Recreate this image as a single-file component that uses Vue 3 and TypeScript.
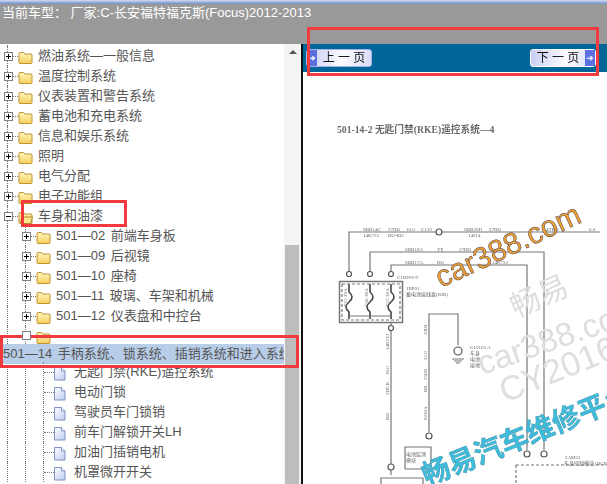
<template>
  <div class="page">
    <header class="head">
      <div class="strip"></div>
      <div class="model">当前车型： 厂家:C-长安福特福克斯(Focus)2012-2013</div>
    </header>

    <main class="body">
      <section class="tree-pane">
        <div class="tree">
          <template v-for="row in rows" :key="row.id">
            <div v-if="row.selected" class="row-selected">{{ row.text }}</div>
            <div v-else class="row" :class="{ 'after-selected': row.afterSelected }">
              <i v-for="n in row.level" :key="n" class="guide"></i>
              <span class="stub">
                <svg v-if="row.toggle" class="toggle" width="11" height="11" viewBox="0 0 11 11">
                  <rect x="1.500" y="1.500" width="8" height="8" fill="#fff" stroke="#808080" />
                  <path v-if="row.toggle !== 'empty'" d="M3 5.500h5" stroke="#000" />
                  <path v-if="row.toggle === 'plus'" d="M5.500 3v5" stroke="#000" />
                </svg>
              </span>
              <svg v-if="row.icon === 'doc'" class="icon" width="15" height="15" viewBox="0 0 15 15">
                <path d="M0.500 1.500h7l3.500 3.500v9h-10.500z" fill="url(#docFill)" stroke="#8090c4" />
                <path d="M7.500 1.500v3.500h3.500" fill="#fff" stroke="#8090c4" />
              </svg>
              <svg v-else class="icon" width="15" height="15" viewBox="0 0 15 15">
                <path d="M1 3.500q0-1 1-1h3.500l1.500 1.500h6q1 0 1 1v7.500q0 1-1 1h-11q-1 0-1-1z" fill="url(#folderFill)" stroke="#bf9430" />
                <path v-if="row.icon === 'open'" d="M4 7h10.500l-2 6.500h-10z" fill="#fbe58e" stroke="#b08a2c" />
              </svg>
              <span class="label">{{ row.text }}</span>
            </div>
          </template>
        </div>
        <div class="scrollbar">
          <span class="arrow"></span>
          <span class="thumb"></span>
        </div>
      </section>

      <section class="doc-pane">
        <nav class="pager">
          <button class="page-btn">
            <span class="btn-arrow">&#10140;</span>
            <span class="btn-text">上 一 页</span>
          </button>
          <button class="page-btn next">
            <span class="btn-text">下 一 页</span>
            <span class="btn-arrow">&#10140;</span>
          </button>
        </nav>

        <svg class="sheet" viewBox="303 73 304 411" width="304" height="411">
          <defs>
            <linearGradient id="carFill" gradientUnits="userSpaceOnUse" x1="440" y1="290" x2="590" y2="215">
              <stop offset="0" stop-color="#f0a030" />
              <stop offset="0.2" stop-color="#8a5ab0" />
              <stop offset="0.4" stop-color="#f6dc48" />
              <stop offset="0.55" stop-color="#9a6ab8" />
              <stop offset="0.75" stop-color="#f8d040" />
              <stop offset="1" stop-color="#ec9a34" />
            </linearGradient>
          </defs>

          <g class="scan">
            <text class="sheet-title" x="337" y="133">501-14-2 无匙门禁(RKE)遥控系统—4</text>

            <g class="wires">
              <path d="M349 274V232H600" />
              <path d="M370 274V252H544V450" />
              <path d="M391 274V265H527V450" />
              <path d="M391 322V475" />
              <path d="M458 345V314H429V432" />
              <path d="M405 469V447H431V469H405" />
              <path d="M381 484V478H423V484" />
              <rect x="339.500" y="281.500" width="63" height="41" stroke-width="1.500" />
              <rect class="dash" x="342" y="284" width="58" height="36" />
              <path class="fuse" d="M349 284v8q6 5 0 10q-6 5 0 10v7M370 284v8q6 5 0 10q-6 5 0 10v7M391 284v8q6 5 0 10q-6 5 0 10v7" />
              <path d="M349 316H391" />
              <path class="dash" d="M516 465H607M516 465V484" />
              <path d="M452 359h12M454 361h8M456 363h4" />
              <circle cx="349" cy="274" r="2.500" />
              <circle cx="370" cy="274" r="2.500" />
              <circle cx="391" cy="274" r="2.500" />
              <circle cx="391" cy="328" r="2.500" />
              <circle cx="458" cy="351" r="4" />
              <circle cx="429" cy="436" r="3" />
              <circle cx="527" cy="454" r="3" />
              <circle cx="544" cy="454" r="3" />
              <circle cx="391" cy="467" r="3" />
              <circle cx="439" cy="232" r="3" />
            </g>

            <g class="tiny">
              <text x="363" y="231">SBB14C</text>
              <text x="363" y="237">14K733</text>
              <text x="388" y="231">27RD</text>
              <text x="388" y="237">BU-RD</text>
              <text x="406" y="231">10.0</text>
              <text x="421" y="231">C110</text>
              <text x="464" y="231">SBB20H</text>
              <text x="468" y="237">14014</text>
              <text x="489" y="231">27RD</text>
              <text x="546" y="231">4TRD</text>
              <text x="589" y="231">6.0</text>
              <text x="405" y="251">SBB18A</text>
              <text x="437" y="251">YE</text>
              <text x="459" y="251">37RD</text>
              <text x="405" y="264">SBB17A</text>
              <text x="437" y="264">RD</text>
              <text x="492" y="264">14K733</text>
              <text x="397" y="279">C1BP01-9</text>
              <text x="406" y="290">1BP01</text>
              <text x="406" y="296">蓄电池接线盒(BJB)</text>
              <text x="470" y="349">G10103 A</text>
              <text x="470" y="355">车身</text>
              <text x="470" y="361">电池</text>
              <text x="470" y="367">接地</text>
              <text x="406" y="456">电池监测</text>
              <text x="406" y="462">模块</text>
              <text x="565" y="459">2AM52</text>
              <text x="564" y="465">车身控制模块 (BCM)</text>
              <text transform="translate(347 306) rotate(-90)">F55 30A</text>
              <text transform="translate(368 306) rotate(-90)">F56 30A</text>
              <text transform="translate(389 306) rotate(-90)">F57 30A</text>
              <text transform="translate(389 350) rotate(-90)">14K733</text>
              <text transform="translate(389 375) rotate(-90)">30.0</text>
              <text transform="translate(389 395) rotate(-90)">3DCB</text>
              <text transform="translate(389 420) rotate(-90)">RD</text>
              <text transform="translate(427 335) rotate(-90)">13D1</text>
              <text transform="translate(427 360) rotate(-90)">35.0</text>
              <text transform="translate(427 380) rotate(-90)">35D0</text>
              <text transform="translate(427 392) rotate(-90)">BK</text>
              <text transform="translate(427 420) rotate(-90)">0210A</text>
            </g>
          </g>

          <g class="marks">
            <text class="mark-gray" transform="translate(516 318) rotate(-24)" font-size="30">畅易</text>
            <text class="mark-gray" transform="translate(482 375) rotate(-19)" font-size="33">car388.com</text>
            <text class="mark-gray" transform="translate(505 403) rotate(-22)" font-size="34">CY2016</text>
            <text class="mark-car" transform="translate(441 288) rotate(-25)" font-size="30" fill="url(#carFill)">car388.com</text>
            <text class="mark-cyan" transform="translate(427 486) rotate(-22)" font-size="28">畅易汽车维修平台</text>
          </g>
        </svg>
      </section>
    </main>

    <!-- 截图上的红色标注框 -->
    <div class="mark-box box-title"></div>
    <div class="mark-box box-row"></div>
    <div class="mark-box box-pager"></div>

    <svg width="0" height="0" class="defs">
      <defs>
        <linearGradient id="folderFill" x1="0" y1="0" x2="0" y2="1">
          <stop offset="0" stop-color="#fff6c0" />
          <stop offset="1" stop-color="#f6cf5e" />
        </linearGradient>
        <linearGradient id="docFill" x1="0" y1="0" x2="1" y2="1">
          <stop offset="0" stop-color="#ffffff" />
          <stop offset="1" stop-color="#bccef2" />
        </linearGradient>
      </defs>
    </svg>
  </div>
</template>

<script setup lang="ts">
interface TreeRow {
  id: number;
  text: string;
  level: number;
  icon: "folder" | "open" | "doc";
  toggle?: "plus" | "minus" | "empty";
  selected?: boolean;
  afterSelected?: boolean;
}

const topLevel = ["", "燃油系统—一般信息", "温度控制系统", "仪表装置和警告系统", "蓄电池和充电系统", "信息和娱乐系统", "照明", "电气分配", "电子功能组"];
const bodyGroups = ["501—02 前端车身板", "501—09 后视镜", "501—10 座椅", "501—11 玻璃、车架和机械", "501—12 仪表盘和中控台"];
const docs = ["无匙门禁(RKE)遥控系统", "电动门锁", "驾驶员车门锁销", "前车门解锁开关LH", "加油门插销电机", "机罩微开开关"];

let id = 0;
const rows: TreeRow[] = [
  ...topLevel.map((text): TreeRow => ({ id: id++, text, level: 0, icon: "folder", toggle: "plus" })),
  { id: id++, text: "车身和油漆", level: 0, icon: "open", toggle: "minus" },
  ...bodyGroups.map((text): TreeRow => ({ id: id++, text, level: 1, icon: "folder", toggle: "plus" })),
  { id: id++, text: "", level: 1, icon: "folder", toggle: "empty" },
  { id: id++, text: "501—14 手柄系统、锁系统、插销系统和进入系统", level: 0, icon: "folder", selected: true },
  ...docs.map((text, i): TreeRow => ({ id: id++, text, level: 2, icon: "doc", afterSelected: i === 0 })),
];
</script>

<style scoped>
.page {
  position: relative;
  width: 607px;
  height: 484px;
  overflow: hidden;
  display: flex;
  flex-direction: column;
  background: #fff;
  font-family: "Liberation Sans", "Noto Sans CJK SC", sans-serif;
}
.head {
  height: 44px;
  flex: none;
  background: #999999;
}
.strip {
  height: 4px;
  background: linear-gradient(#d4def2, #6f8ccb);
}
.model {
  padding-left: 2px;
  font-size: 13px;
  line-height: 17px;
  color: #fff;
  white-space: pre;
}
.body {
  flex: 1;
  min-height: 0;
  display: flex;
}
.tree-pane {
  width: 301px;
  flex: none;
  display: flex;
  overflow: hidden;
}
.tree {
  width: 284px;
  flex: none;
  margin-top: -18px;
  font-size: 13px;
  word-spacing: 2px;
  color: #555;
}
.row {
  height: 20px;
  display: flex;
  align-items: stretch;
  padding-left: 7px;
  white-space: nowrap;
}
.row-selected {
  position: relative;
  height: 20px;
  line-height: 20px;
  padding-left: 3px;
  background: #b8cde8;
  white-space: nowrap;
  overflow: hidden;
}
.row:has(+ .row-selected) {
  height: 18px;
}
.after-selected {
  margin-top: -2px;
}
.guide {
  width: 18px;
  flex: none;
  box-sizing: border-box;
  border-left: 1px dotted #777;
}
.stub {
  position: relative;
  width: 11px;
  flex: none;
  box-sizing: border-box;
  border-left: 1px dotted #777;
}
.stub::after {
  content: "";
  position: absolute;
  left: 0;
  right: 0;
  top: 50%;
  border-top: 1px dotted #777;
}
.toggle {
  position: absolute;
  left: -5px;
  top: calc(50% - 5px);
  z-index: 1;
}
.icon {
  flex: none;
  margin: 4px 5px 0 0;
}
.label {
  line-height: 20px;
}
.scrollbar {
  width: 17px;
  flex: none;
  display: flex;
  flex-direction: column;
  align-items: center;
  background: #f4f4f4;
}
.arrow {
  margin-top: 6px;
  border: 4px solid transparent;
  border-top: 0;
  border-bottom: 4px solid #555;
}
.thumb {
  width: 14px;
  margin: 191px 2px 0 0;
  flex: 1;
  background: #bdbdbd;
}
.doc-pane {
  position: relative;
  flex: 1;
  min-width: 0;
  border-left: 2px solid #111;
}
.pager {
  height: 28px;
  padding: 0 11px 0 3px;
  display: flex;
  justify-content: space-between;
  align-items: center;
  background: #006699;
  border-bottom: 1px solid #fff;
}
.page-btn {
  width: 66px;
  height: 18px;
  padding: 0;
  display: flex;
  align-items: center;
  background: linear-gradient(100deg, #c6ccf2, #fbfbff 55%, #d6daf6);
  border: 1px solid #aab2e4;
  border-radius: 3px;
  font-family: inherit;
  color: #111;
}
.btn-arrow {
  width: 10px;
  height: 100%;
  flex: none;
  background: #5c6fe0;
  color: #fff;
  font-size: 9px;
  line-height: 16px;
  text-align: center;
}
.btn-text {
  flex: 1;
  font-size: 12px;
  line-height: 16px;
  text-align: center;
  white-space: nowrap;
  filter: blur(0.3px);
}
.next {
  border-color: #fff;
}
.sheet {
  display: block;
}
.scan {
  filter: blur(0.45px);
}
.sheet-title {
  font-family: "Liberation Serif", "Noto Sans CJK SC", serif;
  font-size: 9.700px;
  font-weight: 700;
  fill: #6a6a6a;
}
.wires {
  fill: none;
  stroke: #777;
  stroke-width: 1.200;
}
.wires circle {
  stroke: #555;
  fill: #fff;
}
.wires .dash {
  stroke-dasharray: 3 2;
}
.wires .fuse {
  stroke: #444;
  stroke-width: 1.600;
}
.tiny {
  font-size: 5px;
  fill: #666;
  font-family: "Liberation Serif", "Noto Sans CJK SC", serif;
}
.marks {
  filter: blur(0.4px);
  font-family: "Liberation Sans", "Noto Sans CJK SC", sans-serif;
}
.mark-gray {
  fill: #dedede;
}
.mark-car {
  stroke: #4a4050;
  stroke-width: 0.5;
}
.mark-cyan {
  fill: #3fbcdc;
  font-weight: 700;
  stroke: #3a8a9e;
  stroke-width: 0.4;
}
.mark-box {
  position: absolute;
  box-sizing: border-box;
  border: 3px solid #f03a3e;
}
.box-title {
  left: 21px;
  top: 200px;
  width: 106px;
  height: 27px;
}
.box-row {
  left: 0;
  top: 335px;
  width: 299px;
  height: 33px;
}
.box-pager {
  left: 307px;
  top: 27px;
  width: 292px;
  height: 49px;
}
.defs {
  position: absolute;
}
</style>
